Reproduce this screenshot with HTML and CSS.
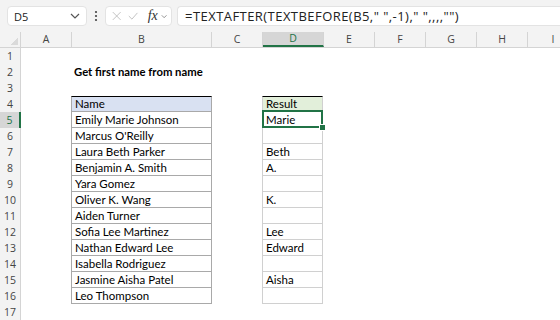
FILE: index.html
```html
<!DOCTYPE html>
<html lang="en">
<head>
    <meta charset="UTF-8">
    <title>Get first name from name</title>
    <link rel="stylesheet" href="styles.css">
</head>
<body>
    <!-- Formula bar -->
    <div class="toolbar">
        <div class="namebox">
            <span>D5</span>
            <svg class="chev" width="10" height="6" viewBox="0 0 10 6"><path d="M1 1 L5 5 L9 1" fill="none" stroke="#555" stroke-width="1.2"/></svg>
        </div>
        <div class="grip">
            <svg width="4" height="12" viewBox="0 0 4 12"><circle cx="2" cy="2" r="1.1" fill="#444"/><circle cx="2" cy="6" r="1.1" fill="#444"/><circle cx="2" cy="10" r="1.1" fill="#444"/></svg>
        </div>
        <div class="fxbox">
            <svg width="12" height="12" viewBox="0 0 12 12"><path d="M1 1 L11 11 M11 1 L1 11" stroke="#b4b4b4" stroke-width="1"/></svg>
            <svg width="13" height="12" viewBox="0 0 13 12"><path d="M1 6 L5 10 L12 2" fill="none" stroke="#b4b4b4" stroke-width="1"/></svg>
            <span class="fx">fx</span>
            <svg width="8" height="5" viewBox="0 0 8 5"><path d="M1 1 L4 4 L7 1" fill="none" stroke="#777" stroke-width="1"/></svg>
        </div>
        <div class="formula">=TEXTAFTER(TEXTBEFORE(B5," ",-1)," ",,,,"")</div>
    </div>

    <!-- Grid -->
    <div class="sheet">
        <div class="hdr">
            <div class="corner"></div>
            <div class="ch w-a">A</div>
            <div class="ch w-b">B</div>
            <div class="ch w-c">C</div>
            <div class="ch w-d active">D</div>
            <div class="ch w-e">E</div>
            <div class="ch w-e">F</div>
            <div class="ch w-e">G</div>
            <div class="ch w-e">H</div>
            <div class="ch w-e">I</div>
        </div>

        <div class="row"><div class="rh">1</div></div>
        <div class="row"><div class="rh">2</div><div class="cell c-a"></div><div class="cell c-b title">Get first name from name</div></div>
        <div class="row"><div class="rh">3</div></div>
        <div class="row">
            <div class="rh">4</div><div class="cell c-a"></div>
            <div class="cell c-b tb first head-blue">Name</div><div class="cell c-c"></div>
            <div class="cell c-d td first head-green">Result</div>
        </div>
        <div class="row">
            <div class="rh active">5</div><div class="cell c-a"></div>
            <div class="cell c-b tb">Emily Marie Johnson</div><div class="cell c-c"></div>
            <div class="cell c-d td selected">Marie</div>
        </div>
        <div class="row">
            <div class="rh">6</div><div class="cell c-a"></div>
            <div class="cell c-b tb">Marcus O'Reilly</div><div class="cell c-c"></div>
            <div class="cell c-d td"></div>
        </div>
        <div class="row">
            <div class="rh">7</div><div class="cell c-a"></div>
            <div class="cell c-b tb">Laura Beth Parker</div><div class="cell c-c"></div>
            <div class="cell c-d td">Beth</div>
        </div>
        <div class="row">
            <div class="rh">8</div><div class="cell c-a"></div>
            <div class="cell c-b tb">Benjamin A. Smith</div><div class="cell c-c"></div>
            <div class="cell c-d td">A.</div>
        </div>
        <div class="row">
            <div class="rh">9</div><div class="cell c-a"></div>
            <div class="cell c-b tb">Yara Gomez</div><div class="cell c-c"></div>
            <div class="cell c-d td"></div>
        </div>
        <div class="row">
            <div class="rh">10</div><div class="cell c-a"></div>
            <div class="cell c-b tb">Oliver K. Wang</div><div class="cell c-c"></div>
            <div class="cell c-d td">K.</div>
        </div>
        <div class="row">
            <div class="rh">11</div><div class="cell c-a"></div>
            <div class="cell c-b tb">Aiden Turner</div><div class="cell c-c"></div>
            <div class="cell c-d td"></div>
        </div>
        <div class="row">
            <div class="rh">12</div><div class="cell c-a"></div>
            <div class="cell c-b tb">Sofia Lee Martinez</div><div class="cell c-c"></div>
            <div class="cell c-d td">Lee</div>
        </div>
        <div class="row">
            <div class="rh">13</div><div class="cell c-a"></div>
            <div class="cell c-b tb">Nathan Edward Lee</div><div class="cell c-c"></div>
            <div class="cell c-d td">Edward</div>
        </div>
        <div class="row">
            <div class="rh">14</div><div class="cell c-a"></div>
            <div class="cell c-b tb">Isabella Rodriguez</div><div class="cell c-c"></div>
            <div class="cell c-d td"></div>
        </div>
        <div class="row">
            <div class="rh">15</div><div class="cell c-a"></div>
            <div class="cell c-b tb">Jasmine Aisha Patel</div><div class="cell c-c"></div>
            <div class="cell c-d td">Aisha</div>
        </div>
        <div class="row">
            <div class="rh">16</div><div class="cell c-a"></div>
            <div class="cell c-b tb">Leo Thompson</div><div class="cell c-c"></div>
            <div class="cell c-d td"></div>
        </div>
        <div class="row"><div class="rh">17</div></div>
    </div>
</body>
</html>
```

FILE: styles.css
```css
/* Spreadsheet look */
body {
    margin: 0;
    width: 560px;
    height: 320px;
    overflow: hidden;
    background: #fff;
    font-family: 'Lato', 'Liberation Sans', sans-serif;
    color: #000;
}

/* Formula bar */
.toolbar {
    display: flex;
    align-items: center;
    height: 32px;
    padding-left: 7px;
    background: #f3f3f3;
    box-sizing: border-box;
    white-space: nowrap;
}

.namebox,
.fxbox,
.formula {
    height: 20px;
    background: #fff;
    border: 1px solid #e3e3e3;
    border-radius: 4px;
    box-sizing: border-box;
    display: flex;
    align-items: center;
}

.namebox {
    width: 80px;
    padding: 0 6px;
    justify-content: space-between;
    font-family: 'Open Sans', sans-serif;
    font-size: 11px;
    color: #222;
}

.grip {
    width: 18px;
    display: flex;
    justify-content: center;
}

.fxbox {
    width: 67px;
    padding: 0 4px 0 6px;
    gap: 7px;
}

.fx {
    font-family: 'Liberation Serif', serif;
    font-style: italic;
    font-size: 14px;
    color: #333;
    margin-left: 2px;
    margin-right: -4px;
}

.formula {
    flex: 1;
    margin-left: 5px;
    padding-left: 7px;
    border-right: none;
    border-radius: 4px 0 0 4px;
    font-family: 'Open Sans', sans-serif;
    font-size: 13px;
    letter-spacing: 0.45px;
    color: #222;
}

/* Sheet */
.sheet {
    white-space: nowrap;
}

.hdr {
    display: flex;
    height: 16px;
    background: #f3f3f3;
    border-bottom: 1px solid #d4d4d4;
    box-sizing: border-box;
}

.corner {
    width: 21px;
    flex: none;
    box-sizing: border-box;
    border-right: 1px solid #d4d4d4;
    background: linear-gradient(135deg, transparent 60%, #dadada 60%) no-repeat right 2px bottom 2px / 9px 9px;
}

.ch {
    flex: none;
    box-sizing: border-box;
    border-right: 1px solid #d4d4d4;
    text-align: center;
    font-family: 'Open Sans', sans-serif;
    font-size: 10.5px;
    line-height: 15px;
    color: #444;
}

.ch.active {
    background: #d6d6d6;
    color: #217346;
    border-bottom: 2px solid #217346;
    line-height: 13px;
}

.w-a { width: 51px; }
.w-b { width: 140px; }
.w-c { width: 51px; }
.w-d { width: 61px; }
.w-e { width: 51px; }

.row {
    display: flex;
    height: 16px;
}

.rh {
    width: 21px;
    flex: none;
    box-sizing: border-box;
    background: #f3f3f3;
    border-right: 1px solid #d4d4d4;
    text-align: center;
    font-family: 'Open Sans', sans-serif;
    font-size: 10.5px;
    line-height: 16px;
    color: #444;
}

.rh.active {
    background: #d6d6d6;
    color: #217346;
    border-right: 2px solid #217346;
}

.cell {
    flex: none;
    box-sizing: border-box;
    height: 16px;
    padding-left: 3px;
    font-size: 11.5px;
    line-height: 15px;
    overflow: visible;
}

.c-a { width: 50px; }
.c-b { width: 141px; }
.c-c { width: 50px; }
.c-d { width: 61px; }

.title {
    font-weight: bold;
    font-size: 11.3px;
    line-height: 16px;
}

.tb {
    border: 1px solid #a9a9a9;
    border-top: none;
}

.td {
    border: 1px solid #d0d0d0;
    border-top: none;
}

.first {
    border-top-width: 1px;
    border-top-style: solid;
    line-height: 14px;
}

.head-blue { background: #d9e1f2; }
.head-green { background: #e2efda; }

/* Active cell outline */
.selected {
    position: relative;
}

.selected::after {
    content: '';
    position: absolute;
    left: -1px;
    top: -2px;
    right: -1px;
    bottom: -1px;
    border: 2px solid #217346;
}

.selected::before {
    content: '';
    position: absolute;
    right: -4px;
    bottom: -4px;
    width: 5px;
    height: 5px;
    background: #217346;
    border: 1px solid #fff;
    z-index: 1;
}
```
